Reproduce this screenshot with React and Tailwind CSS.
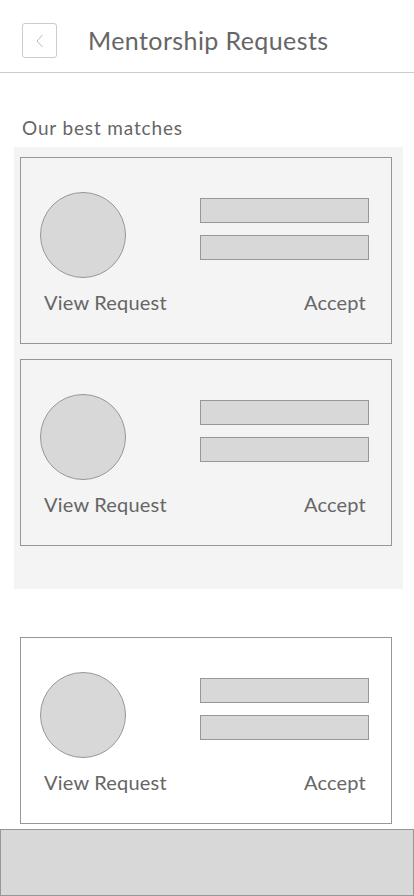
import React from 'react';

const requests = [
  { id: 1, highlighted: true },
  { id: 2, highlighted: true },
  { id: 3, highlighted: false },
];

function RequestCard({ highlighted }) {
  return (
    <div
      className={`border border-[#979797] ${highlighted ? 'bg-[#f4f4f4]' : 'bg-white'} h-[187px] pl-[19px] pr-[22px] pt-[34px]`}
    >
      <div className="flex justify-between">
        <div className="w-[86px] h-[86px] rounded-full bg-[#d8d8d8] border border-[#979797]" />
        <div className="flex flex-col gap-[12px] mt-[6px]">
          <div className="w-[169px] h-[25px] bg-[#d8d8d8] border border-[#979797]" />
          <div className="w-[169px] h-[25px] bg-[#d8d8d8] border border-[#979797]" />
        </div>
      </div>
      <div className="flex justify-between items-center mt-[10px] pl-[4px] pr-[3px] text-[20px] tracking-[0.2px] leading-[28px] text-[#666666]">
        <button>View Request</button>
        <button>Accept</button>
      </div>
    </div>
  );
}

export default function App() {
  const [first, second, third] = requests;

  return (
    <div
      className="w-[414px] h-[896px] bg-white flex flex-col overflow-hidden"
      style={{ fontFamily: 'Lato, "Noto Sans", sans-serif' }}
    >
      {/* Header */}
      <div className="h-[73px] border-b border-[#cccccc] flex items-start pt-[23px] pl-[22px] shrink-0">
        <button className="w-[35px] h-[35px] border border-[#cccccc] rounded-[3px] flex items-center justify-center">
          <svg width="10" height="14" viewBox="0 0 10 14" fill="none">
            <path d="M7.5 1 L2 7 L7.5 13" stroke="#bbbbbb" strokeWidth="1" />
          </svg>
        </button>
        <h1 className="ml-[31px] text-[25px] leading-[35px] text-[#666666] tracking-[0.4px]">Mentorship Requests</h1>
      </div>

      <p className="mt-[43px] ml-[22px] text-[19px] leading-[24px] text-[#666666] tracking-[0.85px]">Our best matches</p>

      {/* Best matches */}
      <div className="mt-[7px] mx-[14px] w-[389px] h-[442px] bg-[#f4f4f4] pl-[6px] pr-[11px] pt-[10px] flex flex-col gap-[15px]">
        <RequestCard highlighted={first.highlighted} />
        <RequestCard highlighted={second.highlighted} />
      </div>

      <div className="mt-[48px] mx-[20px] w-[372px]">
        <RequestCard highlighted={third.highlighted} />
      </div>

      <div className="mt-[5px] flex-1 bg-[#d8d8d8] border border-[#979797]" />
    </div>
  );
}
